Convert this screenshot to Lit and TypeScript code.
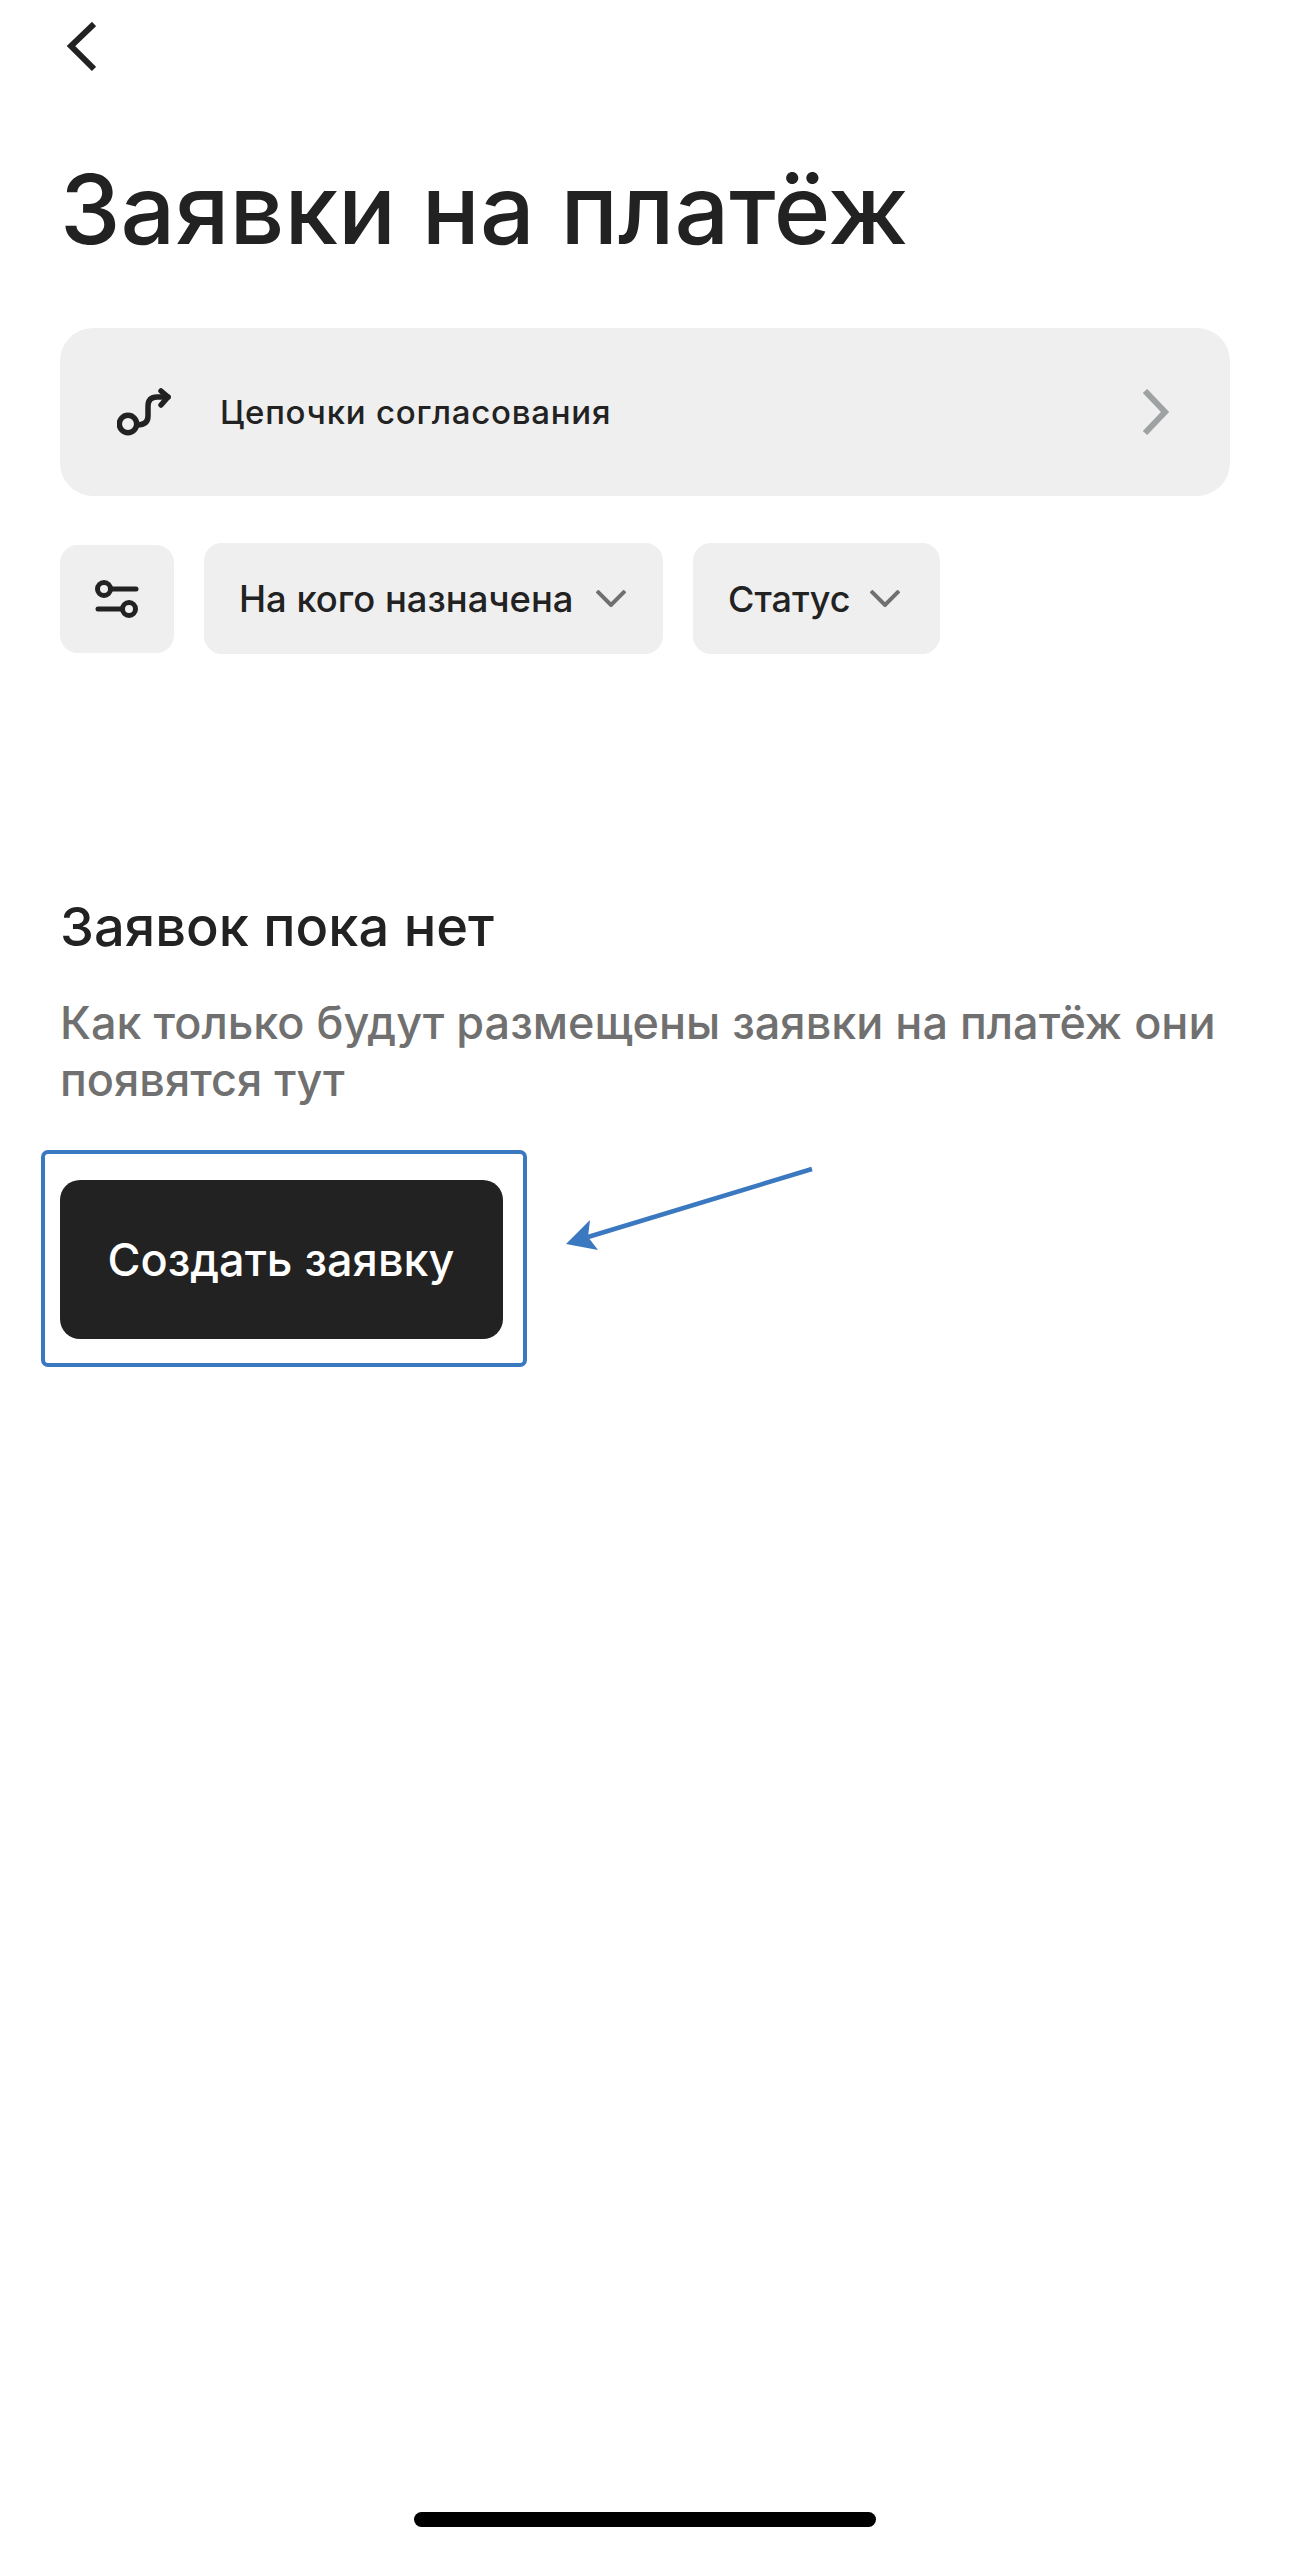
import { LitElement, html, css } from "lit";
import { customElement } from "lit/decorators.js";

@customElement("app-root")
export class AppRoot extends LitElement {
  static styles = css`
    :host { display: block; width: 1290px; height: 2551px; background: #fff; font-family: Inter, "Noto Sans", sans-serif; color: #222; overflow: hidden; position: relative; }
    .page { display: flex; flex-direction: column; padding: 0 60px; }
    .back { display: block; margin-top: 22px; margin-left: 4px; width: 32px; height: 50px; }
    h1 { margin: 82px 0 0; font-size: 96.5px; line-height: 110px; font-weight: 500; white-space: nowrap; }
    .card { margin-top: 64px; height: 168px; width: 1170px; border-radius: 33px; background: #efefef; display: flex; align-items: center; box-sizing: border-box; padding: 0 60px 0 57px; }
    .card svg.route { width: 54px; height: 48px; margin-right: 49px; }
    .card span { flex: 1; font-size: 33px; font-weight: 500; letter-spacing: 0.75px; }
    .card svg.next { width: 28px; height: 46px; }
    .filters { display: flex; align-items: center; margin-top: 47px; }
    .icon-btn { width: 114px; height: 108px; border-radius: 18px; background: #efefef; display: flex; align-items: center; justify-content: center; }
    .icon-btn svg { width: 44px; height: 40px; }
    .pill { height: 111px; border-radius: 18px; background: #efefef; display: flex; align-items: center; justify-content: space-between; box-sizing: border-box; font-size: 36.4px; font-weight: 500; white-space: nowrap; }
    .pill svg { width: 30px; height: 17px; }
    .p1 { margin-left: 30px; width: 459px; padding: 0 37px 0 35px; }
    .p2 { margin-left: 30px; width: 247px; padding: 0 40px 0 35px; font-size: 36px; }
    h2 { margin: 240px 0 0; font-size: 54.2px; line-height: 64px; font-weight: 500; }
    p { margin: 36px 0 0; font-size: 45px; line-height: 57px; font-weight: 500; color: #707070; width: 1170px; }
    .frame { align-self: flex-start; margin: 42px 0 0 -19px; width: 486px; height: 217px; box-sizing: border-box; border: 4.5px solid #3a78bf; border-radius: 7px; display: flex; padding: 25.5px 0 0 14.5px; }
    .cta { width: 443px; height: 159px; border-radius: 20px; background: #222; color: #fff; font-size: 45px; font-weight: 500; display: flex; align-items: center; justify-content: center; }
    .arrow { position: absolute; left: 560px; top: 1160px; width: 260px; height: 100px; }
    .home { position: absolute; left: 414px; top: 2512px; width: 462px; height: 15px; border-radius: 8px; background: #000; }
  `;

  render() {
    return html`
      <div class="page">
        <svg class="back" viewBox="0 0 32 50" fill="none" stroke="#222" stroke-width="6"><path d="M30 2 L7 24 L30 47"/></svg>
        <h1>Заявки на платёж</h1>
        <div class="card">
          <svg class="route" viewBox="0 0 54 48" fill="none" stroke="#222" stroke-width="5.5" stroke-linecap="round" stroke-linejoin="round">
            <circle cx="11" cy="36" r="8.7"/>
            <path d="M20 37 C26 37 31 35 31 28 L31 18 C31 12 34 9 40 9 L51 9"/>
            <path d="M44 3 L51 9 L44 17"/>
          </svg>
          <span>Цепочки согласования</span>
          <svg class="next" viewBox="0 0 28 46" fill="none" stroke="#9fa2a3" stroke-width="6"><path d="M3 2 L23 23 L3 44"/></svg>
        </div>
        <div class="filters">
          <div class="icon-btn">
            <svg viewBox="0 0 44 40" fill="none" stroke="#222" stroke-width="5" stroke-linecap="round">
              <circle cx="9" cy="10" r="6.5"/><path d="M16 10 H41"/>
              <circle cx="34" cy="30" r="6.5"/><path d="M3 30 H27"/>
            </svg>
          </div>
          <div class="pill p1">На кого назначена
            <svg viewBox="0 0 30 17" fill="none" stroke="#707070" stroke-width="4"><path d="M1 1 L15 15 L29 1"/></svg>
          </div>
          <div class="pill p2">Статус
            <svg viewBox="0 0 30 17" fill="none" stroke="#707070" stroke-width="4"><path d="M1 1 L15 15 L29 1"/></svg>
          </div>
        </div>
        <h2>Заявок пока нет</h2>
        <p>Как только будут размещены заявки на платёж они появятся тут</p>
        <div class="frame"><div class="cta">Создать заявку</div></div>
      </div>
      <svg class="arrow" viewBox="0 0 260 100">
        <path d="M252 9 L28 77" stroke="#3a78bf" stroke-width="4.5" fill="none"/>
        <path d="M6 84 L30 60 L28 77 L38 90 Z" fill="#3a78bf"/>
      </svg>
      <div class="home"></div>
    `;
  }
}
